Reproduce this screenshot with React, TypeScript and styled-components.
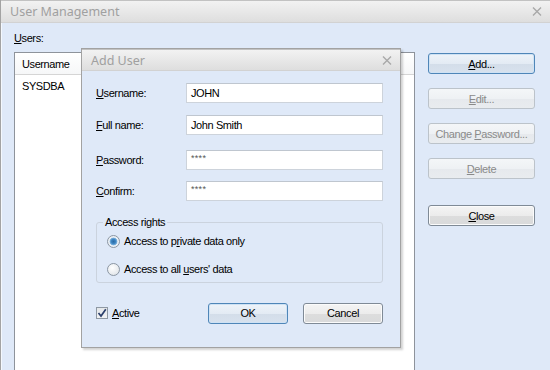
import React from "react";
import styled, { createGlobalStyle, css } from "styled-components";

const Global = createGlobalStyle`
  html, body {
    margin: 0;
    padding: 0;
    width: 550px;
    height: 370px;
    overflow: hidden;
    background: #dfe9f8;
  }
  * { box-sizing: border-box; }
`;

const UI_FONT = `"Liberation Sans", Arial, sans-serif`;
const TITLE_FONT = `"Noto Sans", "Open Sans", sans-serif`;

const Window = styled.div`
  position: relative;
  width: 550px;
  height: 370px;
  overflow: hidden;
  background: #dfe9f8;
  border-left: 1px solid #a3a3a3;
  box-shadow: inset 1px 0 0 #f4f8fd;
  font-family: ${UI_FONT};
  font-size: 11px;
  letter-spacing: -0.4px;
  color: #000;
  white-space: nowrap;
`;

const TitleBar = styled.div<{ $height: number }>`
  display: flex;
  align-items: center;
  justify-content: space-between;
  height: ${(p) => p.$height}px;
  padding: 0 8px 0 9px;
  background: linear-gradient(#f2f2f2, #e6e6e6 60%, #dedede);
  border-top: 1px solid #c2c2c2;
  border-bottom: 1px solid #d2d2d2;
  flex-shrink: 0;
`;

const TitleText = styled.span`
  font-family: ${TITLE_FONT};
  font-size: 12.5px;
  color: #a0a0a0;
  letter-spacing: 0;
`;

const CloseGlyph = () => (
  <svg width="10" height="9" viewBox="0 0 10 9">
    <path d="M1 0.5 L9 8.5 M9 0.5 L1 8.5" stroke="#a8a8a8" strokeWidth="1.4" fill="none" />
  </svg>
);

const WindowBody = styled.div`
  display: flex;
  padding-left: 13px;
`;

const LeftPane = styled.div`
  display: flex;
  flex-direction: column;
  width: 401px;
`;

const PaneLabel = styled.div`
  height: 14px;
  line-height: 14px;
  margin-top: 8px;
  margin-bottom: 7px;
`;

const ListBox = styled.div`
  height: 330px;
  background: #fff;
  border: 1px solid #8e939b;
`;

const ListHeader = styled.div`
  display: flex;
  height: 22px;
  background: linear-gradient(#ffffff, #f6f7f8);
  border-bottom: 1px solid #d5d5d5;
`;

const HeaderCell = styled.div`
  width: 68px;
  padding-left: 7px;
  line-height: 22px;
  border-right: 1px solid #e3e3e3;
`;

const ListRow = styled.div`
  height: 20px;
  line-height: 20px;
  padding-left: 7px;
  margin-top: 1px;
`;

const ButtonColumn = styled.div`
  display: flex;
  flex-direction: column;
  margin-left: 13px;
  padding-top: 30px;
  width: 107px;
`;

type Variant = "default" | "normal" | "disabled";

const Button = styled.div<{ $variant: Variant; $width?: number; $gap?: number }>`
  display: flex;
  align-items: center;
  justify-content: center;
  height: 21px;
  width: ${(p) => (p.$width ? `${p.$width}px` : "100%")};
  margin-top: ${(p) => p.$gap ?? 0}px;
  border-radius: 3px;
  flex-shrink: 0;
  ${(p) =>
    p.$variant === "default"
      ? css`
          border: 1px solid #4f86b8;
          background: linear-gradient(#eef3f9, #e3ebf4 50%, #d3dde9 51%, #d8e2ee);
          box-shadow: inset 0 0 0 1px #cfe2f4;
          color: #000;
        `
      : p.$variant === "normal"
      ? css`
          border: 1px solid #7f8a96;
          background: linear-gradient(#f4f4f4, #ececec 50%, #dddddd 51%, #d9dadb);
          box-shadow: inset 0 0 0 1px #fbfbfb;
          color: #000;
        `
      : css`
          border: 1px solid #bcc3ca;
          background: linear-gradient(#f4f6f8, #eef1f4 50%, #e6e9ed 51%, #e9ecef);
          color: #8a8a8a;
        `}
`;

const Dialog = styled.div`
  position: absolute;
  left: 80px;
  top: 48px;
  width: 320px;
  height: 300px;
  display: flex;
  flex-direction: column;
  background: #dfe9f8;
  border: 1px solid #a2a2a2;
  box-shadow: 2px 2px 2px rgba(0, 0, 0, 0.18);
`;

const DialogBody = styled.div`
  display: flex;
  flex-direction: column;
  padding: 12px 17px 0 14px;
`;

const FieldRow = styled.div<{ $gap: number }>`
  display: flex;
  align-items: center;
  height: 20px;
  margin-top: ${(p) => p.$gap}px;
`;

const FieldLabel = styled.label`
  width: 90px;
  flex-shrink: 0;
`;

const TextInput = styled.div<{ $masked?: boolean }>`
  flex: 1;
  height: 20px;
  line-height: ${(p) => (p.$masked ? "14px" : "18px")};
  padding-left: 4px;
  background: #fff;
  border: 1px solid #cdd3db;
  border-top-color: #bfc6cf;
  font-size: ${(p) => (p.$masked ? "9px" : "11px")};
  color: ${(p) => (p.$masked ? "#555" : "#000")};
  letter-spacing: ${(p) => (p.$masked ? "0.3px" : "-0.4px")};
`;

const Group = styled.fieldset`
  margin: 14px 0 0 0;
  padding: 0 6px 6px 6px;
  border: 1px solid #cbd3de;
  border-radius: 3px;
  min-width: 0;
`;

const Legend = styled.legend`
  padding: 0 2px;
  line-height: 14px;
  height: 14px;
`;

const RadioRow = styled.div<{ $gap: number }>`
  display: flex;
  align-items: center;
  height: 14px;
  margin-top: ${(p) => p.$gap}px;
  padding-left: 4px;
  gap: 4px;
`;

const RadioCircle = styled.span<{ $checked?: boolean }>`
  width: 13px;
  height: 13px;
  border-radius: 50%;
  border: 1px solid #8b96a3;
  background: ${(p) =>
    p.$checked
      ? "radial-gradient(circle at 50% 50%, #2a6aa4 0, #3d85c2 2.2px, #7fb3de 3.6px, #e8eef4 4.2px, #f3f5f7 100%)"
      : "radial-gradient(circle at 40% 35%, #ffffff 0, #e9ecef 60%, #d5d9de 100%)"};
  flex-shrink: 0;
`;

const FooterRow = styled.div`
  display: flex;
  align-items: center;
  height: 22px;
  margin-top: 19px;
`;

const CheckLabel = styled.label`
  display: flex;
  align-items: center;
  gap: 4px;
  flex: 1;
`;

const CheckBox = styled.span`
  display: flex;
  align-items: center;
  justify-content: center;
  width: 12px;
  height: 12px;
  border: 1px solid #8e98a3;
  background: linear-gradient(#e4e7ea, #f1f2f4);
`;

const ButtonPair = styled.div`
  display: flex;
  gap: 15px;
`;

const Key = styled.u`
  text-decoration: underline;
  text-underline-offset: 1px;
`;

export default function App() {
  return (
    <>
      <Global />
      <Window>
        <TitleBar $height={23}>
          <TitleText>User Management</TitleText>
          <CloseGlyph />
        </TitleBar>
        <WindowBody>
          <LeftPane>
            <PaneLabel>
              <Key>U</Key>sers:
            </PaneLabel>
            <ListBox>
              <ListHeader>
                <HeaderCell>Username</HeaderCell>
              </ListHeader>
              <ListRow>SYSDBA</ListRow>
            </ListBox>
          </LeftPane>
          <ButtonColumn>
            <Button $variant="default">
              <span>
                <Key>A</Key>dd...
              </span>
            </Button>
            <Button $variant="disabled" $gap={14}>
              <span>
                <Key>E</Key>dit...
              </span>
            </Button>
            <Button $variant="disabled" $gap={14}>
              <span>
                Change <Key>P</Key>assword...
              </span>
            </Button>
            <Button $variant="disabled" $gap={14}>
              <span>
                <Key>D</Key>elete
              </span>
            </Button>
            <Button $variant="normal" $gap={26}>
              <span>
                <Key>C</Key>lose
              </span>
            </Button>
          </ButtonColumn>
        </WindowBody>

        <Dialog>
          <TitleBar $height={22}>
            <TitleText>Add User</TitleText>
            <CloseGlyph />
          </TitleBar>
          <DialogBody>
            <FieldRow $gap={0}>
              <FieldLabel>
                <Key>U</Key>sername:
              </FieldLabel>
              <TextInput>JOHN</TextInput>
            </FieldRow>
            <FieldRow $gap={12}>
              <FieldLabel>
                <Key>F</Key>ull name:
              </FieldLabel>
              <TextInput>John Smith</TextInput>
            </FieldRow>
            <FieldRow $gap={15}>
              <FieldLabel>
                <Key>P</Key>assword:
              </FieldLabel>
              <TextInput $masked>****</TextInput>
            </FieldRow>
            <FieldRow $gap={11}>
              <FieldLabel>
                <Key>C</Key>onfirm:
              </FieldLabel>
              <TextInput $masked>****</TextInput>
            </FieldRow>
            <Group>
              <Legend>Access rights</Legend>
              <RadioRow $gap={5}>
                <RadioCircle $checked />
                <span>
                  Access to p<Key>r</Key>ivate data only
                </span>
              </RadioRow>
              <RadioRow $gap={14}>
                <RadioCircle />
                <span>
                  Access to all <Key>u</Key>sers' data
                </span>
              </RadioRow>
            </Group>
            <FooterRow>
              <CheckLabel>
                <CheckBox>
                  <svg width="10" height="10" viewBox="0 0 10 10">
                    <path d="M1.5 5 L4 8 L8.8 1.2" stroke="#2b3f6b" strokeWidth="1.7" fill="none" />
                  </svg>
                </CheckBox>
                <span>
                  <Key>A</Key>ctive
                </span>
              </CheckLabel>
              <ButtonPair>
                <Button $variant="default" $width={80} $gap={0}>
                  OK
                </Button>
                <Button $variant="normal" $width={80} $gap={0}>
                  Cancel
                </Button>
              </ButtonPair>
            </FooterRow>
          </DialogBody>
        </Dialog>
      </Window>
    </>
  );
}
